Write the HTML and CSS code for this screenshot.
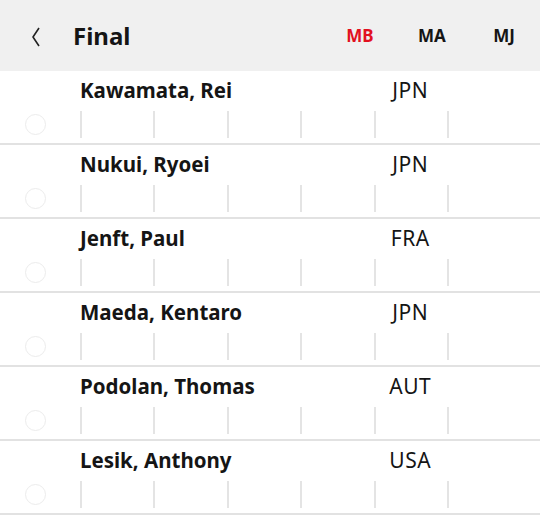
FILE: index.html
```html
<!DOCTYPE html>
<html>
<head>
    <title>Final</title>
    <link rel="stylesheet" href="styles.css">
</head>
<body>
    <!-- Header -->
    <div class="header">
        <div class="back">
            <svg width="14" height="22" viewBox="0 0 14 22">
                <polyline points="9,2 3,11 9,20" fill="none" stroke="#222" stroke-width="1.6" stroke-linejoin="round" />
            </svg>
        </div>
        <div class="title">Final</div>
        <div class="tabs">
            <div class="tab active">MB</div>
            <div class="tab">MA</div>
            <div class="tab">MJ</div>
        </div>
    </div>

    <!-- Athlete list -->
    <div class="list">
        <div class="row">
            <div class="name">Kawamata, Rei</div>
            <div class="country">JPN</div>
            <div class="check"><span class="circle"></span></div>
            <div class="cell"></div><div class="cell"></div><div class="cell"></div>
            <div class="cell"></div><div class="cell"></div><div class="cell"></div>
        </div>
        <div class="row">
            <div class="name">Nukui, Ryoei</div>
            <div class="country">JPN</div>
            <div class="check"><span class="circle"></span></div>
            <div class="cell"></div><div class="cell"></div><div class="cell"></div>
            <div class="cell"></div><div class="cell"></div><div class="cell"></div>
        </div>
        <div class="row">
            <div class="name">Jenft, Paul</div>
            <div class="country">FRA</div>
            <div class="check"><span class="circle"></span></div>
            <div class="cell"></div><div class="cell"></div><div class="cell"></div>
            <div class="cell"></div><div class="cell"></div><div class="cell"></div>
        </div>
        <div class="row">
            <div class="name">Maeda, Kentaro</div>
            <div class="country">JPN</div>
            <div class="check"><span class="circle"></span></div>
            <div class="cell"></div><div class="cell"></div><div class="cell"></div>
            <div class="cell"></div><div class="cell"></div><div class="cell"></div>
        </div>
        <div class="row">
            <div class="name">Podolan, Thomas</div>
            <div class="country">AUT</div>
            <div class="check"><span class="circle"></span></div>
            <div class="cell"></div><div class="cell"></div><div class="cell"></div>
            <div class="cell"></div><div class="cell"></div><div class="cell"></div>
        </div>
        <div class="row">
            <div class="name">Lesik, Anthony</div>
            <div class="country">USA</div>
            <div class="check"><span class="circle"></span></div>
            <div class="cell"></div><div class="cell"></div><div class="cell"></div>
            <div class="cell"></div><div class="cell"></div><div class="cell"></div>
        </div>
    </div>
</body>
</html>
```

FILE: styles.css
```css
body {
    margin: 0;
    font-family: "Noto Sans", "Open Sans", sans-serif;
    color: #151515;
    background: #fff;
}

.header {
    display: flex;
    align-items: center;
    height: 71px;
    background: #f0f0f0;
}

.back {
    width: 28px;
    margin-left: 30px;
    display: flex;
    align-items: center;
    padding-top: 2px;
}

.title {
    flex: 1;
    margin-left: 15px;
    font-size: 24px;
    font-weight: 700;
}

.tabs {
    display: flex;
}

.tab {
    width: 72px;
    text-align: center;
    font-size: 17px;
    font-weight: 700;
}

.tab.active {
    color: #e2111f;
}

.row {
    display: grid;
    grid-template-columns: 80px repeat(6, 73.4px) 1fr;
    grid-template-rows: 27px 27px;
    row-gap: 7px;
    height: 74px;
    box-sizing: border-box;
    padding: 6px 0 5px;
    border-bottom: 2px solid #e2e2e2;
}

.name {
    grid-column: 2 / 6;
    grid-row: 1;
    font-size: 20.5px;
    font-weight: 700;
    line-height: 27px;
}

.country {
    grid-column: 6;
    grid-row: 1;
    text-align: center;
    font-size: 21px;
    letter-spacing: 0.5px;
    line-height: 27px;
}

.check {
    grid-row: 2;
    grid-column: 1;
    display: flex;
    align-items: center;
    padding-left: 25px;
}

.circle {
    width: 19px;
    height: 19px;
    border: 1.5px solid #ececec;
    border-radius: 50%;
}

.cell {
    grid-row: 2;
    border-left: 2px solid #e4e4e4;
}
```
